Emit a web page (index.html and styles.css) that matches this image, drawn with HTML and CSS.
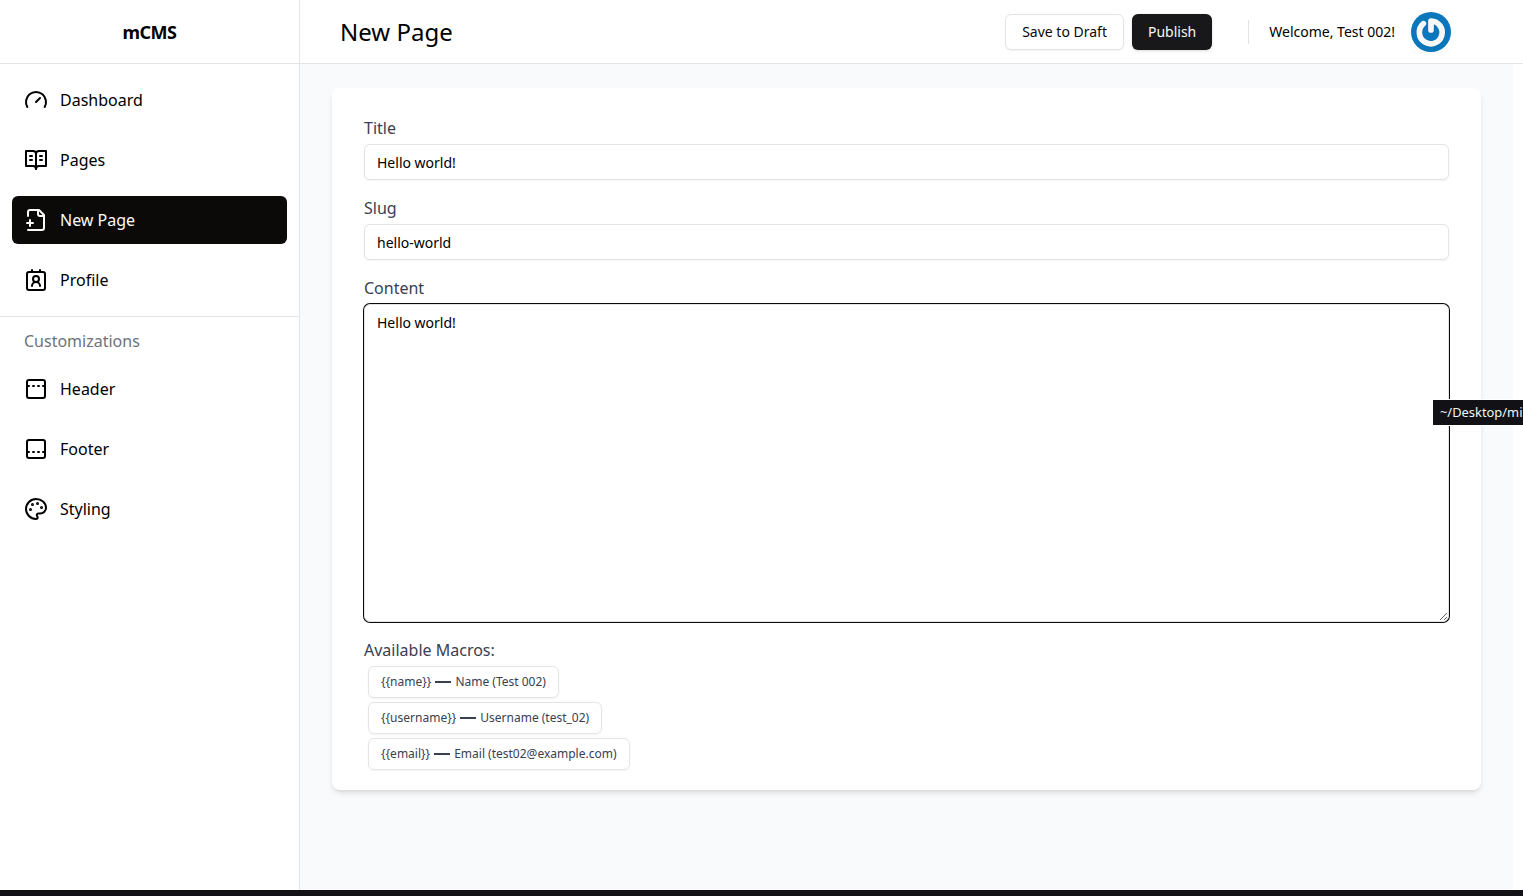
FILE: index.html
```html
<!DOCTYPE html>
<html lang="en">
<head>
<meta charset="utf-8">
<title>New Page - mCMS</title>
<link rel="stylesheet" href="styles.css">
</head>
<body>
<div class="app">
  <aside class="sidebar">
    <div class="brand">mCMS</div>
    <nav class="nav">
      <a class="nav-item"><svg class="icon" viewBox="0 0 24 24"><path d="m12 14 4-4"/><path d="M3.34 19a10 10 0 1 1 17.32 0"/></svg>Dashboard</a>
      <a class="nav-item"><svg class="icon" viewBox="0 0 24 24"><path d="M2 3h7a3 3 0 0 1 3 3v15a3 3 0 0 0-3-3H2z"/><path d="M22 3h-7a3 3 0 0 0-3 3v15a3 3 0 0 1 3-3h7z"/><path d="M6 8h2M6 12h2M16 8h2M16 12h2"/></svg>Pages</a>
      <a class="nav-item active"><svg class="icon" viewBox="0 0 24 24"><path d="M4 22h14a2 2 0 0 0 2-2V7l-5-5H6a2 2 0 0 0-2 2v4"/><path d="M14 2v4a2 2 0 0 0 2 2h4"/><path d="M3 15h6M6 12v6"/></svg>New Page</a>
      <a class="nav-item"><svg class="icon" viewBox="0 0 24 24"><path d="M16 18a4 4 0 0 0-8 0"/><circle cx="12" cy="11" r="3"/><rect x="3" y="4" width="18" height="18" rx="2"/><path d="M8 2v2M16 2v2"/></svg>Profile</a>
    </nav>
    <div class="section-title">Customizations</div>
    <nav class="nav nav-custom">
      <a class="nav-item"><svg class="icon" viewBox="0 0 24 24"><rect x="3" y="3" width="18" height="18" rx="2"/><path d="M14 9h1M19 9h2M3 9h2M9 9h1"/></svg>Header</a>
      <a class="nav-item"><svg class="icon" viewBox="0 0 24 24"><rect x="3" y="3" width="18" height="18" rx="2"/><path d="M14 15h1M19 15h2M3 15h2M9 15h1"/></svg>Footer</a>
      <a class="nav-item"><svg class="icon" viewBox="0 0 24 24"><g class="dots"><circle cx="13.5" cy="6.5" r=".5"/><circle cx="17.5" cy="10.5" r=".5"/><circle cx="8.5" cy="7.5" r=".5"/><circle cx="6.5" cy="12.5" r=".5"/></g><path d="M12 2C6.5 2 2 6.5 2 12s4.500 10 10 10c.926 0 1.648-.746 1.648-1.688 0-.437-.18-.835-.437-1.125-.29-.289-.438-.652-.438-1.125a1.640 1.640 0 0 1 1.668-1.668h1.996c3.051 0 5.555-2.503 5.555-5.554C21.965 6.012 17.461 2 12 2z"/></svg>Styling</a>
    </nav>
  </aside>
  <div class="main">
    <header class="topbar">
      <h1 class="page-title">New Page</h1>
      <button class="btn btn-outline">Save to Draft</button>
      <button class="btn btn-primary">Publish</button>
      <span class="separator"></span>
      <span class="welcome">Welcome, Test 002!</span>
      <span class="avatar"><svg class="avatar-art" viewBox="0 0 40 40"><circle class="disc" cx="20" cy="20" r="20"/><path class="mark-shadow" d="M13 12A11.500 11.500 0 1 0 20.600 9.500V18.500"/><path class="mark" d="M12.400 11.700A11.400 11.400 0 1 0 20 9V18"/></svg></span>
    </header>
    <main class="content">
      <form class="card">
        <label class="label" for="title">Title</label>
        <input class="field" id="title" value="Hello world!">
        <label class="label" for="slug">Slug</label>
        <input class="field" id="slug" value="hello-world">
        <label class="label" for="body">Content</label>
        <textarea class="field editor" id="body">Hello world!</textarea>
        <div class="label macros-label">Available Macros:</div>
        <div class="macros">
          <div class="macro">{{name}}<span class="dash"></span>Name (Test 002)</div>
          <div class="macro">{{username}}<span class="dash"></span>Username (test_02)</div>
          <div class="macro">{{email}}<span class="dash"></span>Email (test02@example.com)</div>
        </div>
      </form>
    </main>
  </div>
</div>
<div class="bottom-bar"></div>
<div class="path-tip">~/Desktop/mi</div>
</body>
</html>
```
FILE: styles.css
```css
* { box-sizing: border-box; }
body {
  margin: 0;
  height: 896px;
  overflow: hidden;
  display: flex;
  flex-direction: column;
  background: #fff;
  color: #000;
  font: 16px/24px "Noto Sans", sans-serif;
}
.app { display: flex; flex: 1; min-height: 0; }
.bottom-bar { height: 6px; flex: none; background: #111116; }

.sidebar { width: 300px; flex: none; border-right: 1px solid #e4e4e7; }
.brand {
  height: 64px;
  border-bottom: 1px solid #e4e4e7;
  display: flex;
  align-items: center;
  justify-content: center;
  padding-top: 1px;
  font-size: 18px;
  font-weight: 700;
  letter-spacing: -0.45px;
}
.nav { display: flex; flex-direction: column; gap: 12px; padding: 12px; }
.nav-item {
  height: 48px;
  padding: 0 12px;
  display: flex;
  align-items: center;
  gap: 12px;
  border-radius: 6px;
}
.nav-item.active { background: #0c0a09; color: #fafafa; }
.icon {
  width: 24px;
  height: 24px;
  fill: none;
  stroke: currentColor;
  stroke-width: 2;
  stroke-linecap: round;
  stroke-linejoin: round;
}
.dots { fill: currentColor; }
.section-title {
  border-top: 1px solid #e4e4e7;
  padding: 12px 24px 0;
  color: #71717a;
}
.nav-custom { padding-top: 12px; }

.main { flex: 1; min-width: 0; display: flex; flex-direction: column; }
.topbar {
  height: 64px;
  flex: none;
  border-bottom: 1px solid #e4e4e7;
  display: flex;
  align-items: center;
  padding: 0 72px 0 40px;
}
.page-title { margin: 0 auto 0 0; font-size: 24px; line-height: 32px; font-weight: 400; }
.btn {
  height: 36px;
  padding: 0 16px;
  border: 0;
  border-radius: 6px;
  font: 14px/20px "Noto Sans", sans-serif;
  box-shadow: 0 1px 2px rgba(0, 0, 0, .06);
}
.btn-outline { border: 1px solid #e4e4e7; background: #fff; color: #09090b; margin-right: 8px; }
.btn-primary { background: #18181b; color: #fafafa; box-shadow: 0 1px 3px rgba(0, 0, 0, .15); }
.separator { width: 1px; height: 24px; background: #e4e4e7; margin: 0 20px 0 36px; }
.welcome { font-size: 14px; line-height: 20px; }
.avatar { width: 40px; height: 40px; margin-left: 16px; border-radius: 6px; box-shadow: 0 1px 2px rgba(0, 0, 0, .04); }
.avatar-art { display: block; width: 40px; height: 40px; fill: none; stroke-linecap: round; stroke-linejoin: round; }
.disc { fill: #0a76bb; }
.mark { stroke: #f7f7f7; stroke-width: 5.7; }
.mark-shadow { stroke: #075b91; stroke-width: 5.7; opacity: .45; }

.content { flex: 1; margin-right: 10px; padding: 24px 32px; background: #f8fafc; }
.card {
  height: 702px;
  padding: 28px 32px 20px;
  display: flex;
  flex-direction: column;
  border-radius: 8px;
  background: #fff;
  box-shadow: 0 4px 6px -1px rgba(0, 0, 0, .1), 0 2px 4px -2px rgba(0, 0, 0, .1);
}
.label { color: #374151; margin-bottom: 4px; }
.field {
  width: 100%;
  height: 36px;
  margin: 0 0 16px;
  padding: 4px 12px;
  border: 1px solid #e4e4e7;
  border-radius: 6px;
  background: #fff;
  color: #000;
  font: 14px/20px "Noto Sans", sans-serif;
  box-shadow: 0 1px 2px rgba(0, 0, 0, .05);
}
.editor { height: 318px; padding: 8px 12px; outline: 0; box-shadow: 0 0 0 1px #09090b; }
.macros-label { margin-bottom: 4px; }
.macros { display: flex; flex-direction: column; align-items: flex-start; gap: 4px; padding-left: 4px; }
.macro {
  height: 32px;
  padding: 0 12px;
  display: flex;
  align-items: center;
  border: 1px solid #e4e4e7;
  border-radius: 6px;
  color: #374151;
  font-size: 12px;
  line-height: 16px;
  box-shadow: 0 1px 2px rgba(0, 0, 0, .05);
}
.dash { width: 16px; height: 2px; margin: 0 4px; background: #374151; }

.path-tip {
  position: absolute;
  left: 1433px;
  top: 400px;
  width: 90px;
  height: 25px;
  padding-left: 7px;
  overflow: hidden;
  white-space: nowrap;
  background: #111116;
  color: #f4f4f5;
  font-size: 12.9px;
  line-height: 25px;
  box-shadow: 0 0 0 1px #fff;
}
```
